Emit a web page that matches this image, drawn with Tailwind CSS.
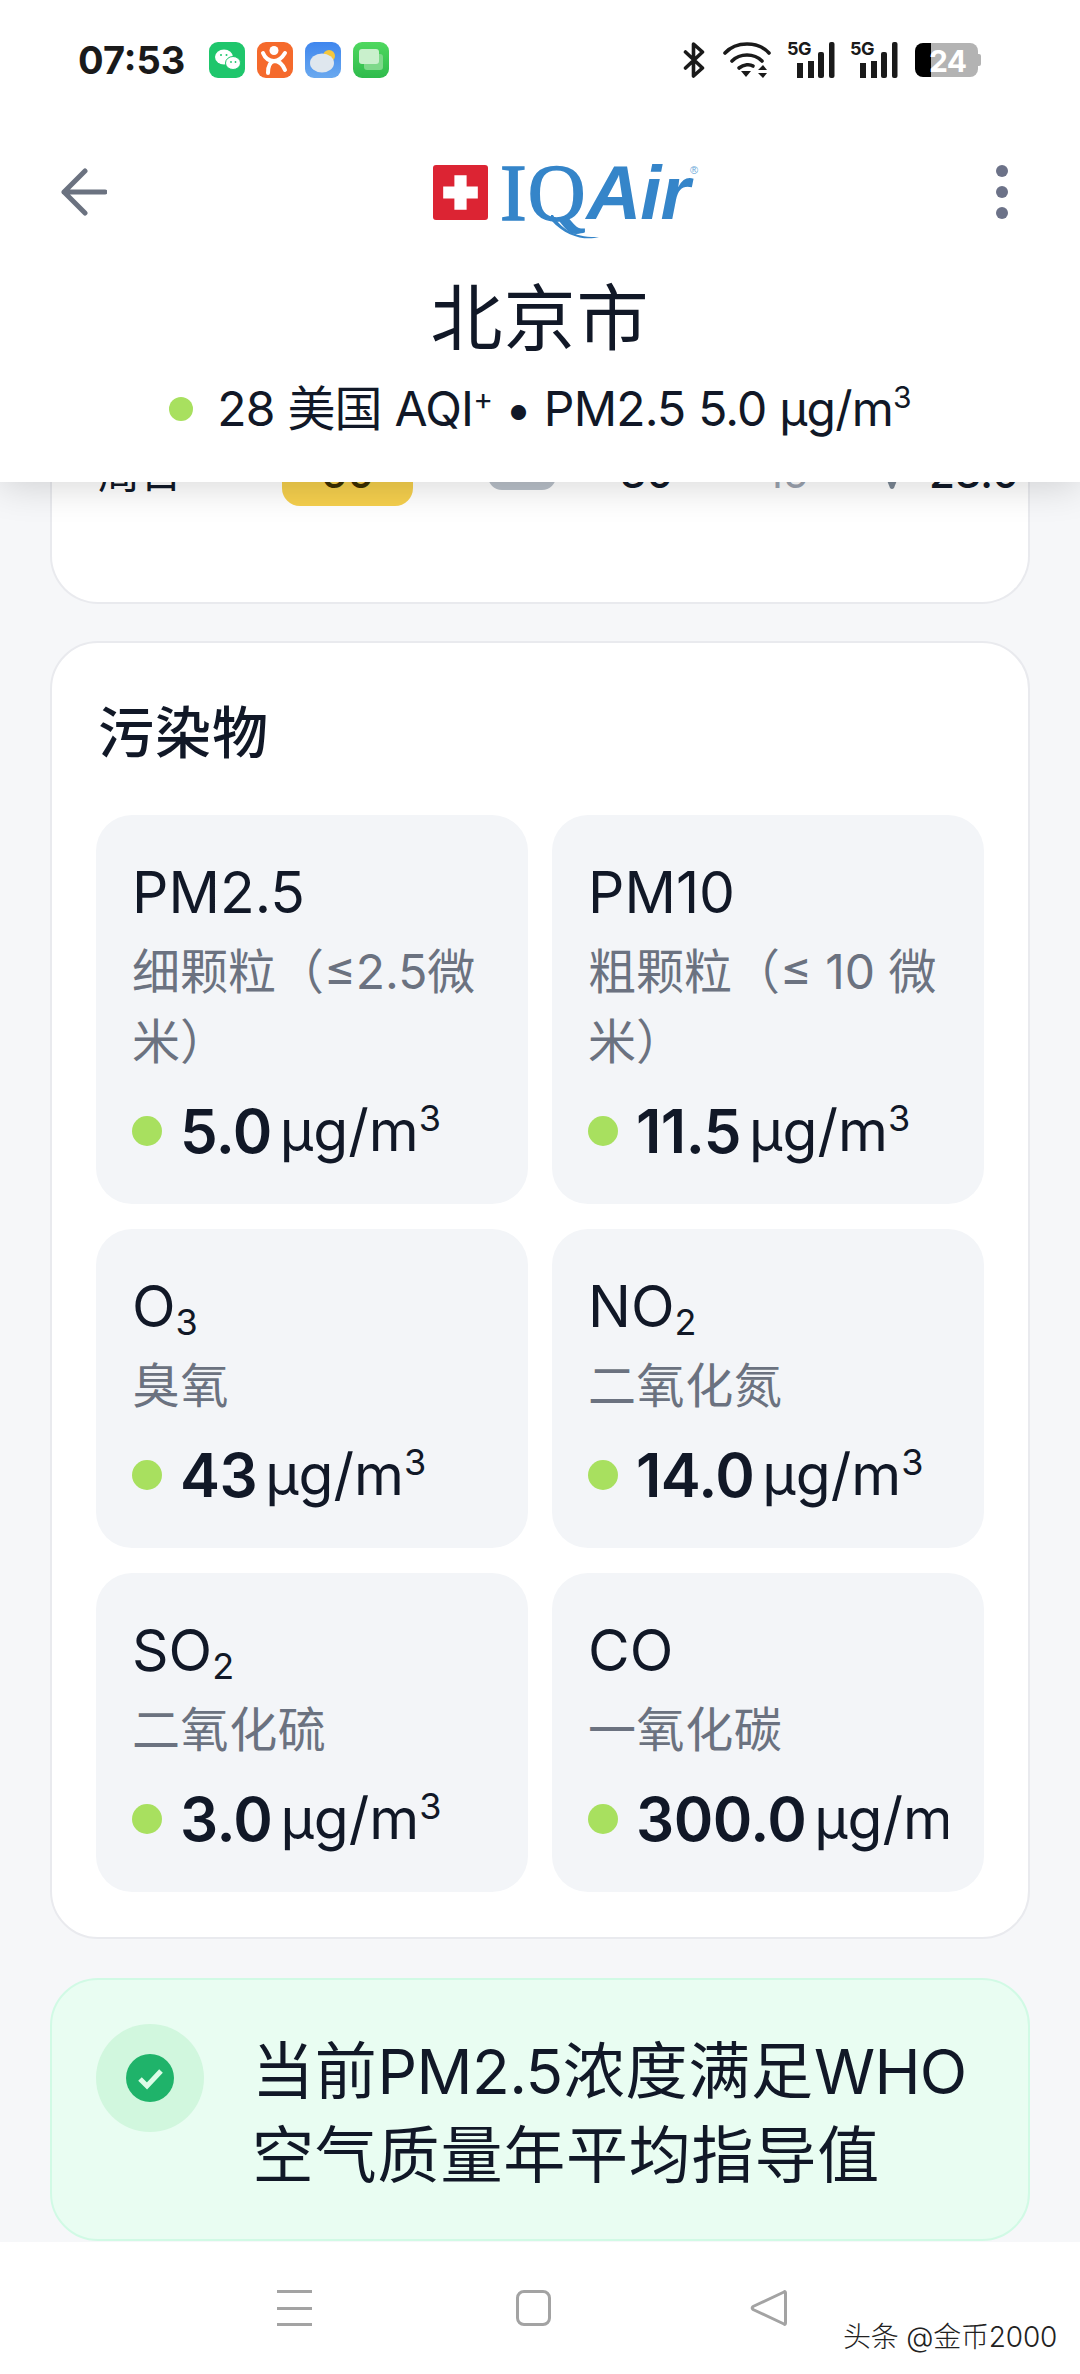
<!DOCTYPE html>
<html lang="zh">
<head>
<meta charset="utf-8">
<script src="https://cdn.jsdelivr.net/npm/@tailwindcss/browser@4"></script>
</head>
<body class="bg-white">
<div class="w-[1080px] h-[2374px] flex flex-col overflow-hidden bg-[#f6f7f9] font-[Inter,'Noto_Sans_CJK_SC',sans-serif] text-[#111827]">

  <!-- Header -->
  <header class="relative z-10 h-[482px] shrink-0 bg-white shadow-[0_4px_36px_rgba(0,0,0,0.16)] flex flex-col">
    <!-- Status bar -->
    <div class="h-[120px] shrink-0 flex items-center pl-[78px] pr-[99px]">
      <span class="text-[38px] font-bold leading-none text-[#1a1a1a] w-[131px]">07:53</span>
      <div class="flex gap-[12px]">
        <svg class="w-[36px] h-[36px]" viewBox="0 0 36 36"><rect width="36" height="36" rx="9" fill="#1fc66c"/><ellipse cx="15" cy="15" rx="9" ry="7.500" fill="#fff"/><ellipse cx="24" cy="21" rx="7.500" ry="6.500" fill="#fff" stroke="#1fc66c" stroke-width="1"/><circle cx="12" cy="13" r="1" fill="#1fc66c"/><circle cx="17.500" cy="13" r="1" fill="#1fc66c"/><circle cx="22" cy="20" r="0.900" fill="#1fc66c"/><circle cx="26.500" cy="20" r="0.900" fill="#1fc66c"/></svg>
        <svg class="w-[36px] h-[36px]" viewBox="0 0 36 36"><rect width="36" height="36" rx="9" fill="#f56a2c"/><circle cx="17" cy="8.500" r="4.500" fill="#fff"/><path d="M6 11c2 5 6 8 11 8s8-3 11-8M11 31c0-7 2-11 6-12 5 0 9 4 11 9" fill="none" stroke="#fff" stroke-width="4" stroke-linecap="round"/></svg>
        <svg class="w-[36px] h-[36px]" viewBox="0 0 36 36"><defs><linearGradient id="sk" x1="0" y1="0" x2="0" y2="1"><stop offset="0" stop-color="#3f86ee"/><stop offset="1" stop-color="#6aa9ef"/></linearGradient></defs><rect width="36" height="36" rx="9" fill="url(#sk)"/><circle cx="24" cy="14" r="6" fill="#f5c73d"/><ellipse cx="17" cy="21" rx="12" ry="9.500" fill="#dfe7ee"/></svg>
        <svg class="w-[36px] h-[36px]" viewBox="0 0 36 36"><defs><linearGradient id="ms" x1="0" y1="0" x2="0" y2="1"><stop offset="0" stop-color="#4fd85f"/><stop offset="1" stop-color="#2fbb4c"/></linearGradient></defs><rect width="36" height="36" rx="9" fill="url(#ms)"/><rect x="11" y="12" width="19" height="16" rx="3" fill="#7ed98a"/><rect x="6" y="7" width="20" height="15" rx="3" fill="#c9f0cc"/></svg>
      </div>
      <div class="ml-auto flex items-center h-[40px]">
        <svg class="w-[23px] h-[38px] mr-[16px]" viewBox="0 0 22 38"><path d="M2 11 19 27 10 35V3l9 8L2 27" fill="none" stroke="#1a1a1a" stroke-width="3.600" stroke-linejoin="round" stroke-linecap="round"/></svg>
        <svg class="w-[50px] h-[38px] mr-[15px]" viewBox="0 0 48 38"><path d="M2 12C13 0 35 0 46 12" fill="none" stroke="#1a1a1a" stroke-width="3.600" stroke-linecap="round"/><path d="M9 20C17 12 31 12 39 20" fill="none" stroke="#1a1a1a" stroke-width="3.600" stroke-linecap="round"/><path d="M16 27c5-4 11-4 14-2" fill="none" stroke="#1a1a1a" stroke-width="3.600" stroke-linecap="round"/><path d="M18 30h10l-5 6zM40 24l4 5h-9zM35 32h9l-4 5z" fill="#1a1a1a"/></svg>
        <div class="relative w-[48px] h-[38px] mr-[15px]">
          <span class="absolute left-0 -top-[1px] text-[18px] font-bold leading-[18px] tracking-tight text-[#1a1a1a]">5G</span>
          <svg class="absolute inset-0 w-[48px] h-[38px]" viewBox="0 0 48 38"><rect x="10" y="22" width="6" height="15" fill="#1a1a1a"/><rect x="21" y="20" width="6" height="17" fill="#1a1a1a"/><rect x="31" y="11" width="6" height="26" rx="2" fill="#1a1a1a"/><rect x="42" y="1" width="5.500" height="36" rx="2" fill="#1a1a1a"/></svg>
        </div>
        <div class="relative w-[48px] h-[38px] mr-[17px]">
          <span class="absolute left-0 -top-[1px] text-[18px] font-bold leading-[18px] tracking-tight text-[#1a1a1a]">5G</span>
          <svg class="absolute inset-0 w-[48px] h-[38px]" viewBox="0 0 48 38"><rect x="10" y="22" width="6" height="15" fill="#1a1a1a"/><rect x="21" y="20" width="6" height="17" fill="#1a1a1a"/><rect x="31" y="11" width="6" height="26" rx="2" fill="#1a1a1a"/><rect x="42" y="1" width="5.500" height="36" rx="2" fill="#1a1a1a"/></svg>
        </div>
        <div class="relative w-[66px] h-[34px] flex">
          <div class="w-[16px] h-[34px] bg-black rounded-l-[8px]"></div>
          <div class="w-[47px] h-[34px] bg-[#b3b3b3] rounded-r-[8px]"></div>
          <div class="w-[3px] h-[12px] mt-[11px] bg-[#b3b3b3] rounded-r-[2px]"></div>
          <span class="absolute left-[14px] top-0 text-[30px] font-bold leading-[36px] text-white tracking-tight">24</span>
        </div>
      </div>
    </div>
    <!-- Nav row -->
    <div class="relative mt-[17px] h-[110px] shrink-0 flex items-center justify-between pl-[61px] pr-[72px]">
      <svg class="w-[46px] h-[48px]" viewBox="0 0 46 48"><path d="M44 24H3M24 3 3 24l21 21" fill="none" stroke="#6b7280" stroke-width="5" stroke-linecap="round" stroke-linejoin="round"/></svg>
      <div class="absolute left-[433px] top-[28px] h-[74px] w-[290px] flex items-start">
        <svg class="w-[55px] h-[55px] shrink-0" viewBox="0 0 54 54"><rect width="54" height="54" rx="3" fill="#dc2433"/><path d="M21 10h12v11h11v12H33v11H21V33H10V21h11z" fill="#fff"/></svg>
        <span class="ml-[12px] font-['Liberation_Serif',serif] text-[80px] leading-[56px] tracking-[1px] text-[#3585c9] [-webkit-text-stroke:1.5px_#3585c9]">IQ</span>
        <span class="font-['Liberation_Sans',sans-serif] font-bold italic text-[76px] leading-[56px] tracking-[-1px] text-[#3585c9]">Air</span>
        <span class="ml-[1px] -mt-[1px] font-['Liberation_Sans',sans-serif] text-[11px] leading-[12px] text-[#6aa7d8]">®</span>
        <svg class="absolute left-[118px] top-[48px] w-[50px] h-[26px]" viewBox="0 0 50 26"><path d="M2 2c8 14 22 23 46 22-14 4-36 0-52-22z" fill="#3585c9"/></svg>
      </div>
      <div class="flex flex-col gap-[9px]">
        <div class="w-[12px] h-[12px] rounded-full bg-[#6c7288]"></div>
        <div class="w-[12px] h-[12px] rounded-full bg-[#6c7288]"></div>
        <div class="w-[12px] h-[12px] rounded-full bg-[#6c7288]"></div>
      </div>
    </div>
    <h1 class="text-center text-[72px] font-normal leading-[88px] tracking-[1px] mt-[27px]">北京市</h1>
    <div class="flex items-center justify-center gap-[24px] text-[48px] leading-[68px] tracking-[-0.8px] mt-[13px]">
      <span class="w-[24px] h-[24px] rounded-full bg-[#a8e05f]"></span>
      <span>28 美国 AQI<span class="text-[30px] leading-none align-[16px]">+</span> • PM2.5 5.0 µg/m<span class="text-[30px] leading-none align-[18px]">3</span></span>
    </div>
  </header>

  <main class="flex-1 min-h-0 overflow-hidden px-[50px]">
    <!-- Forecast card, scrolled under the header -->
    <section class="flex flex-col h-[122px] bg-white border-x-2 border-b-2 border-[#e9eaee] rounded-b-[48px]">
      <div class="-mt-[42px] h-[66px] shrink-0 flex items-center text-[42px] leading-[66px] whitespace-nowrap overflow-hidden">
        <span class="shrink-0 ml-[46px] w-[184px]">周日</span>
        <span class="shrink-0 w-[131px] h-[66px] rounded-[18px] bg-[#f5cf4d] text-center text-[#3b2f00] font-medium">60</span>
        <span class="shrink-0 ml-[75px] w-[68px] h-[50px] -mt-[16px] rounded-[14px] bg-[#b9c0c9]"></span>
        <span class="shrink-0 ml-[64px] w-[146px] font-medium">30</span>
        <span class="shrink-0 w-[119px] text-[#9ca3af]">15</span>
        <svg class="shrink-0 w-[14px] h-[28px] mr-[30px] mt-[4px]" viewBox="0 0 14 28"><path d="M0 0h14v14L9 27q-2 2-4 0L0 14z" fill="#7b8794"/></svg>
        <span class="shrink-0 font-medium">23.0 km/h</span>
      </div>
    </section>

    <!-- Pollutants -->
    <section class="mt-[37px] h-[1298px] bg-white border-2 border-[#e9eaee] rounded-[48px] pt-[60px] px-[44px]">
      <h2 class="text-[56px] font-medium leading-[60px] tracking-[1px] ml-[2px] mb-[52px]">污染物</h2>
      <div class="grid grid-cols-2 gap-x-[24px] gap-y-[25px]">

        <div class="min-w-0 bg-[#f3f5f8] rounded-[36px] pt-[36px] px-[36px] pb-[31px]">
          <div class="text-[57px] leading-[84px]">PM2.5</div>
          <div class="mt-[2px] text-[48px] leading-[70px] text-[#6b7280]">细颗粒（≤2.5微米）</div>
          <div class="mt-[12px] flex items-center h-[84px] overflow-hidden whitespace-nowrap">
            <span class="shrink-0 w-[30px] h-[30px] rounded-full bg-[#a8e05f] mr-[18px]"></span>
            <span class="text-[60px] font-semibold tracking-[-0.5px]">5.0</span>
            <span class="ml-[8px] text-[57px]">µg/m<span class="text-[36px] leading-none align-[20px]">3</span></span>
          </div>
        </div>

        <div class="min-w-0 bg-[#f3f5f8] rounded-[36px] pt-[36px] px-[36px] pb-[31px]">
          <div class="text-[57px] leading-[84px]">PM10</div>
          <div class="mt-[2px] text-[48px] leading-[70px] text-[#6b7280]">粗颗粒（≤ 10 微米）</div>
          <div class="mt-[12px] flex items-center h-[84px] overflow-hidden whitespace-nowrap">
            <span class="shrink-0 w-[30px] h-[30px] rounded-full bg-[#a8e05f] mr-[18px]"></span>
            <span class="text-[60px] font-semibold tracking-[-0.5px]">11.5</span>
            <span class="ml-[8px] text-[57px]">µg/m<span class="text-[36px] leading-none align-[20px]">3</span></span>
          </div>
        </div>

        <div class="min-w-0 bg-[#f3f5f8] rounded-[36px] pt-[36px] px-[36px] pb-[31px]">
          <div class="text-[57px] leading-[84px]">O<span class="text-[36px] leading-none align-[-8px]">3</span></div>
          <div class="mt-[2px] text-[48px] leading-[70px] tracking-[0.6px] text-[#6b7280]">臭氧</div>
          <div class="mt-[12px] flex items-center h-[84px] overflow-hidden whitespace-nowrap">
            <span class="shrink-0 w-[30px] h-[30px] rounded-full bg-[#a8e05f] mr-[18px]"></span>
            <span class="text-[60px] font-semibold tracking-[-0.5px]">43</span>
            <span class="ml-[8px] text-[57px]">µg/m<span class="text-[36px] leading-none align-[20px]">3</span></span>
          </div>
        </div>

        <div class="min-w-0 bg-[#f3f5f8] rounded-[36px] pt-[36px] px-[36px] pb-[31px]">
          <div class="text-[57px] leading-[84px]">NO<span class="text-[36px] leading-none align-[-8px]">2</span></div>
          <div class="mt-[2px] text-[48px] leading-[70px] tracking-[0.6px] text-[#6b7280]">二氧化氮</div>
          <div class="mt-[12px] flex items-center h-[84px] overflow-hidden whitespace-nowrap">
            <span class="shrink-0 w-[30px] h-[30px] rounded-full bg-[#a8e05f] mr-[18px]"></span>
            <span class="text-[60px] font-semibold tracking-[-0.5px]">14.0</span>
            <span class="ml-[8px] text-[57px]">µg/m<span class="text-[36px] leading-none align-[20px]">3</span></span>
          </div>
        </div>

        <div class="min-w-0 bg-[#f3f5f8] rounded-[36px] pt-[36px] px-[36px] pb-[31px]">
          <div class="text-[57px] leading-[84px]">SO<span class="text-[36px] leading-none align-[-8px]">2</span></div>
          <div class="mt-[2px] text-[48px] leading-[70px] tracking-[0.6px] text-[#6b7280]">二氧化硫</div>
          <div class="mt-[12px] flex items-center h-[84px] overflow-hidden whitespace-nowrap">
            <span class="shrink-0 w-[30px] h-[30px] rounded-full bg-[#a8e05f] mr-[18px]"></span>
            <span class="text-[60px] font-semibold tracking-[-0.5px]">3.0</span>
            <span class="ml-[8px] text-[57px]">µg/m<span class="text-[36px] leading-none align-[20px]">3</span></span>
          </div>
        </div>

        <div class="min-w-0 bg-[#f3f5f8] rounded-[36px] pt-[36px] px-[36px] pb-[31px]">
          <div class="text-[57px] leading-[84px]">CO</div>
          <div class="mt-[2px] text-[48px] leading-[70px] tracking-[0.6px] text-[#6b7280]">一氧化碳</div>
          <div class="mt-[12px] flex items-center h-[84px] overflow-hidden whitespace-nowrap">
            <span class="shrink-0 w-[30px] h-[30px] rounded-full bg-[#a8e05f] mr-[18px]"></span>
            <span class="text-[60px] font-semibold tracking-[-0.5px]">300.0</span>
            <span class="ml-[8px] text-[57px]">µg/m<span class="text-[36px] leading-none align-[20px]">3</span></span>
          </div>
        </div>

      </div>
    </section>

    <!-- Notice -->
    <section class="mt-[39px] bg-[#e9fdf2] border-2 border-[#d1fae5] rounded-[48px] pt-[44px] px-[44px] pb-[41px] flex items-start gap-[48px]">
      <div class="shrink-0 w-[108px] h-[108px] rounded-full bg-[#d1f7de] flex items-center justify-center">
        <svg class="w-[48px] h-[48px]" viewBox="0 0 48 48"><circle cx="24" cy="24" r="24" fill="#1fb36a"/><path d="M14 25l7 7 14-15" fill="none" stroke="#dcfce7" stroke-width="5"/></svg>
      </div>
      <p class="mt-[6px] text-[62px] leading-[84px] tracking-[0.8px]">当前<span class="tracking-[-0.6px]">PM2.5</span>浓度满足<span class="tracking-[-0.6px]">WHO</span>空气质量年平均指导值</p>
    </section>
  </main>

  <!-- Bottom navigation -->
  <nav class="relative h-[132px] shrink-0 bg-white">
    <div class="absolute left-[277px] top-[48px] w-[35px] h-[36px] flex flex-col justify-between">
      <div class="h-[3px] bg-[#a3a3a3]"></div>
      <div class="h-[3px] bg-[#a3a3a3]"></div>
      <div class="h-[3px] bg-[#a3a3a3]"></div>
    </div>
    <div class="absolute left-[516px] top-[48px] w-[35px] h-[36px] rounded-[8px] border-[3px] border-[#a3a3a3]"></div>
    <svg class="absolute left-[750px] top-[47px] w-[37px] h-[38px]" viewBox="0 0 37 38"><path d="M34 3c1-1 1.500 0 1.500 1v30c0 1-.5 2-1.500 1L3 20.500c-1-1-1-2 0-3z" fill="none" stroke="#a3a3a3" stroke-width="3" stroke-linejoin="round"/></svg>
    <span class="absolute left-[843px] top-[79px] text-[28px] leading-[32px] tracking-[-0.2px] font-light text-[#222] whitespace-nowrap [text-shadow:1px_1px_0_#fff]">头条 @金币2000</span>
  </nav>
</div>
</body>
</html>
